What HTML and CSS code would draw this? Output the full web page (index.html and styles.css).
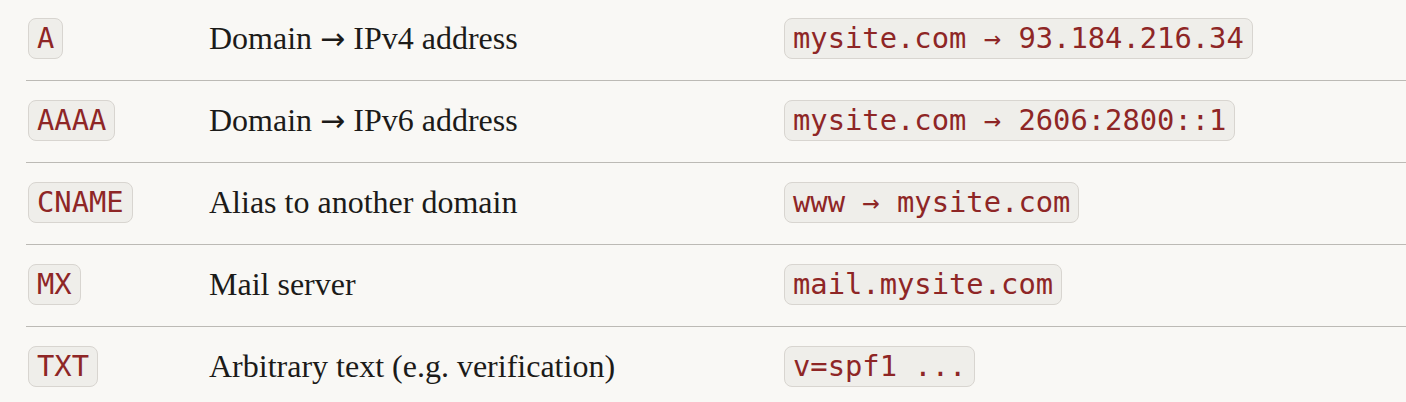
FILE: index.html
```html
<!DOCTYPE html>
<html lang="en">
<head>
    <meta charset="UTF-8">
    <meta name="viewport" content="width=device-width, initial-scale=1.0">
    <title>DNS Record Types</title>
    <link rel="stylesheet" href="styles.css">
</head>
<body>
    <!-- DNS record reference table -->
    <table class="record-table">
        <colgroup>
            <col class="col-type">
            <col class="col-desc">
            <col class="col-example">
        </colgroup>
        <tbody>
            <tr>
                <td><code>A</code></td>
                <td>Domain <span class="arrow">→</span> IPv4 address</td>
                <td><code>mysite.com → 93.184.216.34</code></td>
            </tr>
            <tr>
                <td><code>AAAA</code></td>
                <td>Domain <span class="arrow">→</span> IPv6 address</td>
                <td><code>mysite.com → 2606:2800::1</code></td>
            </tr>
            <tr>
                <td><code>CNAME</code></td>
                <td>Alias to another domain</td>
                <td><code>www → mysite.com</code></td>
            </tr>
            <tr>
                <td><code>MX</code></td>
                <td>Mail server</td>
                <td><code>mail.mysite.com</code></td>
            </tr>
            <tr>
                <td><code>TXT</code></td>
                <td>Arbitrary text (e.g. verification)</td>
                <td><code>v=spf1 ...</code></td>
            </tr>
        </tbody>
    </table>
</body>
</html>
```

FILE: styles.css
```css
body {
    margin: 0;
    padding: 0;
    background-color: #f9f8f5;
    font-family: "Liberation Serif", "DejaVu Serif", serif;
    color: #1c1b19;
    overflow: hidden;
}
.record-table {
    width: calc(100% - 26px);
    margin: -1px 0 0 26px;
    border-collapse: collapse;
    table-layout: fixed;
}
.col-type {
    width: 183px;
}
.col-desc {
    width: 575px;
}
.record-table td {
    padding: 19px 0 21px;
    border-bottom: 1px solid #bcbab5;
    vertical-align: middle;
    font-size: 32px;
    line-height: 41px;
    white-space: nowrap;
}
.record-table td:first-child {
    padding-left: 2px;
}
.record-table tr:last-child td {
    border-bottom: none;
}
.arrow {
    font-family: "DejaVu Sans", sans-serif;
    font-size: 30px;
}
code {
    display: inline-block;
    font-family: "DejaVu Sans Mono", "Liberation Mono", monospace;
    font-size: 28.8px;
    line-height: 39px;
    padding: 0 8px;
    color: #8e2626;
    background-color: #efeeea;
    border: 1px solid #d8d5d0;
    border-radius: 8px;
    vertical-align: top;
}
```
